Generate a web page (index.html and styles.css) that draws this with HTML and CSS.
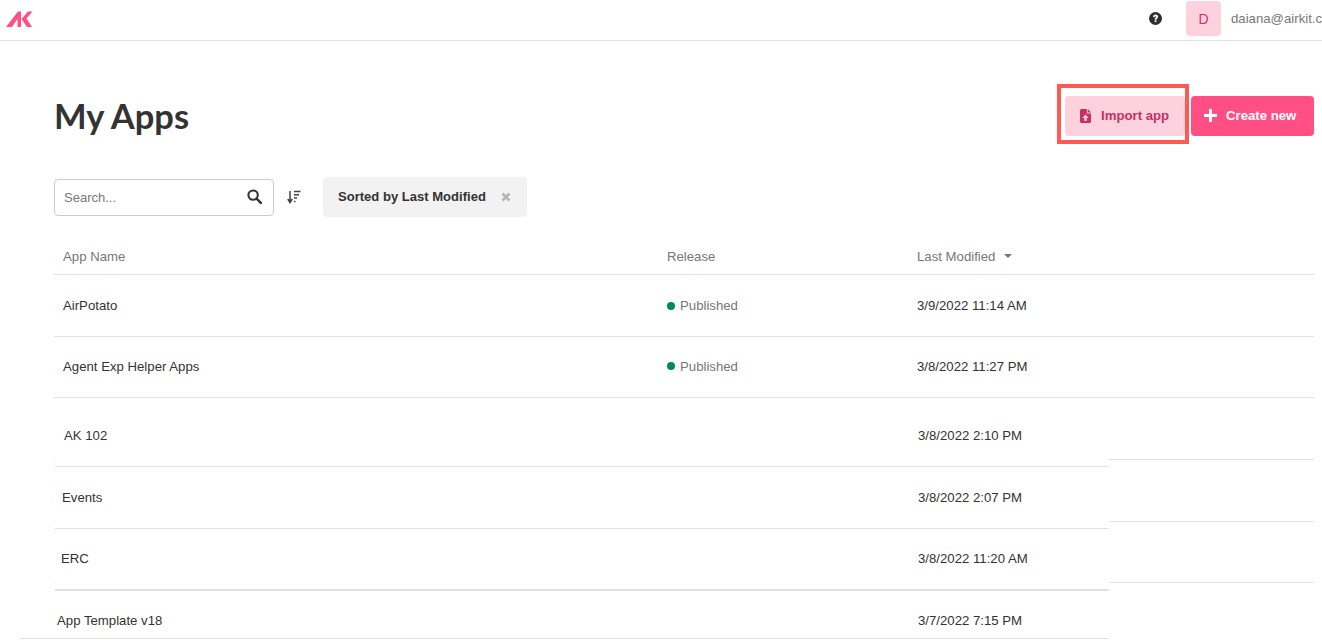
FILE: index.html
```html
<!DOCTYPE html>
<html lang="en">
<head>
<meta charset="utf-8">
<title>My Apps</title>
<link rel="stylesheet" href="styles.css">
</head>
<body>
<header class="topbar">
  <svg class="logo" viewBox="0 0 26 16" width="26" height="16"><path d="M0 16 L12 0.500 H15 V16 H11.500 V8 L6 16 Z" fill="#ff4f84"/><path d="M15.500 8 L22 0.500 H26.500 L20.500 7.500 L26 16 H21 Z" fill="#ff4f84"/></svg>
  <div class="account">
    <svg class="help" viewBox="0 0 14 14" width="13" height="13"><circle cx="7" cy="7" r="7" fill="#2e2e2e"/><path d="M4.400 5.400 C4.500 3.700 5.700 2.800 7.100 2.800 C8.700 2.800 9.800 3.800 9.800 5.100 C9.800 6.800 8 6.800 8 8.300 H6.100 C6.100 6.100 7.800 6.100 7.800 5.200 C7.800 4.800 7.500 4.500 7 4.500 C6.500 4.500 6.200 4.900 6.100 5.600 Z" fill="#fff"/><rect x="6.100" y="9" width="1.900" height="1.900" fill="#fff"/></svg>
    <div class="avatar">D</div>
    <div class="email">daiana@airkit.c</div>
  </div>
</header>
<main class="page">
  <div class="heading">
    <h1>My Apps</h1>
    <div class="actions">
      <div class="highlight">
        <button class="btn btn-soft">
          <svg viewBox="0 0 12 14" width="11" height="14" preserveAspectRatio="none"><path d="M1.500 0 H7.500 V4.500 H12 V12.500 Q12 14 10.500 14 H1.500 Q0 14 0 12.500 V1.500 Q0 0 1.500 0 Z M8.500 0 L12 3.500 H8.500 Z M6 5.500 L2.500 9 H4.700 V12 H7.300 V9 H9.500 Z" fill="#c92f62" fill-rule="evenodd"/></svg>
          Import app
        </button>
      </div>
      <button class="btn btn-solid">
        <svg viewBox="0 0 13 13" width="13" height="13"><path d="M5 0 H8 V5 H13 V8 H8 V13 H5 V8 H0 V5 H5 Z" fill="#fff"/></svg>
        Create new
      </button>
    </div>
  </div>
  <div class="filters">
    <div class="search">
      <span class="placeholder">Search...</span>
      <svg class="search-icon" viewBox="0 0 16 16" width="15" height="15"><circle cx="6.500" cy="6.500" r="5" fill="none" stroke="#333" stroke-width="2.200"/><path d="M10.200 10.200 L15 15" stroke="#333" stroke-width="2.600" stroke-linecap="round"/></svg>
    </div>
    <svg class="sort" viewBox="0 0 14 14" width="14" height="14"><path d="M3 1 V11 M0.800 9 L3 12.500 L5.200 9" fill="none" stroke="#444" stroke-width="1.500"/><path d="M7 1.500 H13.500 M7 4.800 H12 M7 8.100 H10 M7 11.400 H8.500" stroke="#444" stroke-width="1.500"/></svg>
    <div class="chip"><span class="chip-label">Sorted by Last Modified</span>
      <svg class="chip-x" viewBox="0 0 10 10" width="10" height="10"><path d="M1.500 1.500 L8.500 8.500 M8.500 1.500 L1.500 8.500" stroke="#b5b5b5" stroke-width="2.600"/></svg>
    </div>
  </div>
  <div class="table">
    <div class="row head">
      <div class="c-name">App Name</div>
      <div class="c-rel">Release</div>
      <div class="c-date">Last Modified <span class="caret"></span></div>
    </div>
    <div class="row"><div class="c-name">AirPotato</div><div class="c-rel"><i class="dot"></i>Published</div><div class="c-date">3/9/2022 11:14 AM</div></div>
    <div class="row short"><div class="c-name">Agent Exp Helper Apps</div><div class="c-rel"><i class="dot"></i>Published</div><div class="c-date">3/8/2022 11:27 PM</div></div>
    <div class="row"></div>
    <div class="row"></div>
    <div class="row short"></div>
  </div>
</main>
<section class="overlay">
  <div class="orow o1"><span class="oname">AK 102</span><span class="odate">3/8/2022 2:10 PM</span></div>
  <div class="orow o2"><span class="oname">Events</span><span class="odate">3/8/2022 2:07 PM</span></div>
  <div class="orow o3"><span class="oname">ERC</span><span class="odate">3/8/2022 11:20 AM</span></div>
  <div class="orow o4"><span class="oname">App Template v18</span><span class="odate">3/7/2022 7:15 PM</span></div>
</section>
</body>
</html>
```
FILE: styles.css
```css
* { box-sizing: border-box; }
html, body { margin: 0; height: 640px; overflow: hidden; background: #fff; }
body { position: relative; font-family: "Liberation Sans", Arial, sans-serif; font-size: 13.200px; color: #333; }
.topbar { height: 41px; border-bottom: 1px solid #e2e2e2; display: flex; justify-content: space-between; align-items: center; padding-left: 6px; }
.logo { margin-top: -2px; }
.account { display: flex; align-items: center; width: 173px; margin-top: -3px; overflow: hidden; white-space: nowrap; }
.help { flex: none; margin-right: 24px; }
.avatar { flex: none; width: 35px; height: 35px; margin-right: 10px; background: #fed1df; border-radius: 4px; color: #d92f66; font-size: 14px; display: flex; align-items: center; justify-content: center; }
.email { color: #777; font-size: 13.200px; }
.page { padding: 0 8px 0 54px; }
.heading { display: flex; justify-content: space-between; align-items: flex-start; height: 99px; padding-top: 43px; }
h1 { margin: 12px 0 0; font-family: Lato, sans-serif; font-size: 34.500px; line-height: 40px; font-weight: 700; color: #333; }
.actions { display: flex; align-items: flex-start; gap: 2px; }
.highlight { border: 4px solid #ff5a50; width: 132px; height: 60px; padding: 8px 0 0 4px; }
.btn { border: 0; height: 40px; padding-bottom: 2px; border-radius: 4px; font: 700 13.200px "Liberation Sans", Arial, sans-serif; display: flex; align-items: center; }
.btn-soft { width: 120px; background: #fed1df; color: #c92f62; gap: 10px; padding-left: 15px; }
.btn-solid { width: 123px; margin-top: 12px; background: #ff4f84; color: #fff; gap: 9px; padding-left: 13px; }
.filters { display: flex; align-items: center; height: 40px; margin-top: 37px; }
.search { width: 220px; height: 37px; border: 1px solid #ccc; border-radius: 4px; display: flex; justify-content: space-between; align-items: center; padding: 0 11px 0 9px; font-size: 13px; }
.search-icon { margin-top: -2px; }
.placeholder { color: #777; }
.sort { margin-left: 13px; }
.chip { margin-left: 22px; height: 40px; width: 204px; background: #f2f2f2; border-radius: 4px; font-size: 13.050px; font-weight: 700; display: flex; align-items: center; justify-content: space-between; padding: 0 16px 0 15px; }
.chip-label { margin-bottom: 2px; }
.chip-x { flex: none; }
.table { margin-top: 17px; }
.row { display: flex; height: 62px; align-items: center; border-bottom: 1px solid #e2e2e2; padding-left: 9px; }
.row.short { height: 61px; padding-bottom: 2px; }
.row.head { height: 41px; color: #777; padding-top: 4px; }
.c-name { width: 604px; }
.c-rel { width: 250px; color: #777; display: flex; align-items: center; }
.c-date { display: flex; align-items: center; }
.caret { margin-left: 9px; border: 4px solid transparent; border-top: 4px solid #777; border-bottom: 0; }
.dot { width: 8px; height: 8px; border-radius: 50%; background: #008a55; margin-right: 5px; }
.overlay { position: absolute; left: 55px; top: 398px; width: 1054px; height: 242px; display: flex; flex-direction: column; }
.orow { display: flex; align-items: center; background: #fff; border-bottom: 1px solid #e2e2e2; }
.odate { margin-left: auto; width: 191px; }
.o1 { height: 69px; padding: 7px 0 0 9px; }
.o2 { height: 62px; padding: 0 0 0 7px; }
.o3 { height: 62px; padding: 0 0 1px 6px; border-bottom-width: 2px; }
.o4 { height: 48px; margin-left: -35px; padding: 12px 0 0 37px; }
```
